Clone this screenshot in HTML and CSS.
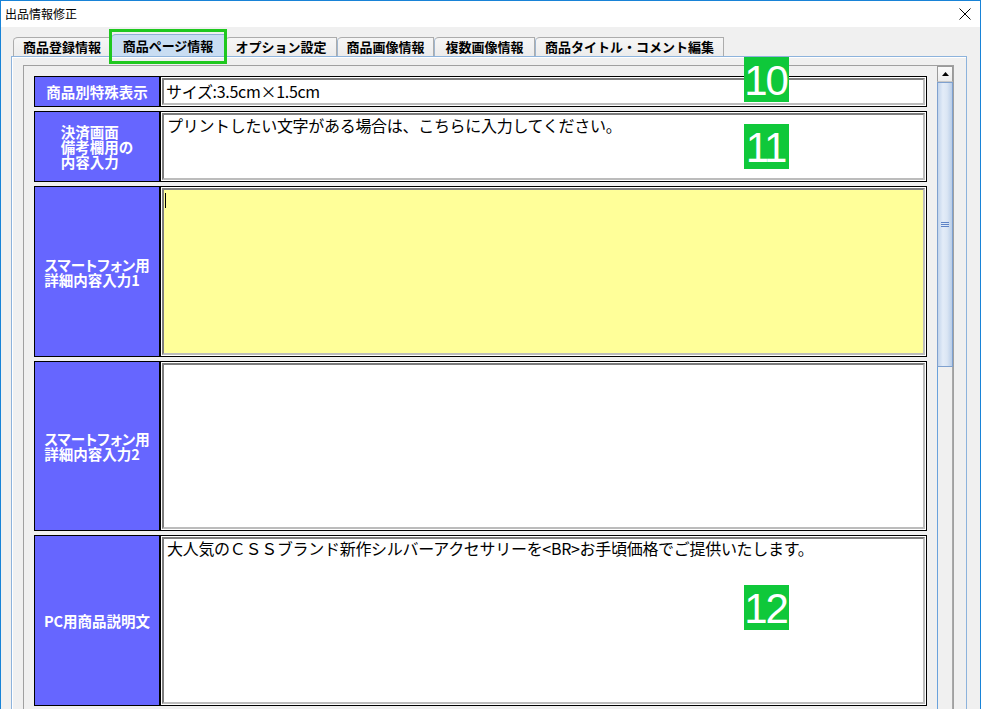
FILE: index.html
```html
<!DOCTYPE html>
<html lang="ja">
<head>
<meta charset="utf-8">
<title>出品情報修正</title>
<link rel="stylesheet" href="styles.css">
</head>
<body>
<div class="window">
  <div class="titlebar">
    <span class="title">出品情報修正</span>
    <svg class="close" width="12" height="12" viewBox="0 0 12 12"><path d="M0.5 0.5 L11.5 11.5 M11.5 0.5 L0.5 11.5" stroke="#000" stroke-width="1" fill="none"/></svg>
  </div>
  <div class="tabs">
    <div class="tab w98">商品登録情報</div>
    <div class="tab tab-active w114">商品ページ情報</div>
    <div class="tab w112">オプション設定</div>
    <div class="tab w97">商品画像情報</div>
    <div class="tab w101">複数画像情報</div>
    <div class="tab w189">商品タイトル・コメント編集</div>
  </div>
  <div class="panel">
    <div class="frame">
      <div class="content">
        <div class="row h31">
          <div class="label"><div class="label-text">商品別特殊表示</div></div>
          <div class="field"><div class="field-inner single">サイズ:3.5cm×1.5cm</div></div>
        </div>
        <div class="row h71">
          <div class="label"><div class="label-text">決済画面<br>備考欄用の<br>内容入力</div></div>
          <div class="field"><div class="field-inner multi">プリントしたい文字がある場合は、こちらに入力してください。</div></div>
        </div>
        <div class="row h171">
          <div class="label"><div class="label-text">スマートフォン用<br>詳細内容入力1</div></div>
          <div class="field"><div class="field-inner multi focused"><span class="caret"></span></div></div>
        </div>
        <div class="row h170">
          <div class="label"><div class="label-text">スマートフォン用<br>詳細内容入力2</div></div>
          <div class="field"><div class="field-inner multi"></div></div>
        </div>
        <div class="row h171">
          <div class="label"><div class="label-text">PC用商品説明文</div></div>
          <div class="field"><div class="field-inner multi pc">大人気のＣＳＳブランド新作シルバーアクセサリーを&lt;BR&gt;お手頃価格でご提供いたします。</div></div>
        </div>
      </div>
      <div class="scrollbar">
        <div class="sb-up"><svg width="7" height="4" viewBox="0 0 7 4"><path d="M0 4 L3.5 0 L7 4 Z" fill="#000"/></svg></div>
        <div class="sb-thumb"><span class="grip"></span></div>
        <div class="sb-track"></div>
      </div>
    </div>
  </div>
</div>
<div class="highlight"></div>
<div class="badge b10">10</div>
<div class="badge b11">11</div>
<div class="badge b12">12</div>
</body>
</html>
```
FILE: styles.css
```css
html, body {
  margin: 0;
  padding: 0;
}
body {
  width: 981px;
  height: 709px;
  overflow: hidden;
  font-family: "Noto Sans CJK JP", "Noto Sans", sans-serif;
  background: #f0f0f0;
}
.window {
  box-sizing: border-box;
  width: 981px;
  height: 709px;
  border: 1px solid #1883d7;
  border-bottom: none;
  background: #f0f0f0;
  display: flex;
  flex-direction: column;
}
.titlebar {
  height: 26px;
  flex: none;
  background: #fff;
  display: flex;
  align-items: center;
  justify-content: space-between;
  padding: 0 9px 0 4px;
}
.title {
  font-size: 12px;
  line-height: 14px;
  color: #000;
}
.close {
  display: block;
}
.tabs {
  flex: none;
  display: flex;
  align-items: flex-end;
  height: 19px;
  margin-top: 10px;
  padding-left: 12px;
}
.tab {
  box-sizing: border-box;
  height: 19px;
  border: 1px solid #acacac;
  border-bottom: none;
  border-top-left-radius: 5px 4px;
  background: linear-gradient(#f6f6f6, #ececec);
  font-size: 13px;
  font-weight: bold;
  line-height: 18px;
  text-align: center;
  color: #000;
  white-space: nowrap;
}
.tab + .tab {
  border-left-color: #9fb6cf;
}
.tab-active {
  height: 22px;
  line-height: 22px;
  background: #c9ddf2;
  border-color: #8fb0d6;
}
.w98 { width: 98px; }
.w114 { width: 114px; }
.w112 { width: 112px; }
.w97 { width: 97px; }
.w101 { width: 101px; }
.w189 { width: 189px; }
.panel {
  flex: 1;
  min-height: 0;
  margin: 0 13px 0 10px;
  border: 1px solid #8db3dc;
  border-bottom: none;
  box-shadow: inset 1px 1px 0 #fff;
  padding: 8px 12px 0 11px;
  display: flex;
  flex-direction: column;
}
.frame {
  flex: 1;
  min-height: 0;
  border: 1px solid #a0a0a0;
  border-bottom: none;
  display: flex;
}
.content {
  flex: 1;
  min-width: 0;
  padding: 10px 10px 0 10px;
  display: flex;
  flex-direction: column;
  gap: 4px;
  overflow: hidden;
}
.row {
  flex: none;
  display: flex;
}
.h31 { height: 31px; }
.h71 { height: 71px; }
.h170 { height: 170px; }
.h171 { height: 171px; }
.label {
  box-sizing: border-box;
  width: 126px;
  flex: none;
  background: #6666ff;
  border: 1px solid #000;
  display: flex;
  align-items: center;
  justify-content: center;
}
.label-text {
  color: #fff;
  font-size: 14.5px;
  font-weight: bold;
  line-height: 15px;
  font-feature-settings: "palt";
  text-align: left;
  white-space: nowrap;
}
.field {
  box-sizing: border-box;
  flex: 1;
  min-width: 0;
  border: 1px solid #000;
  padding: 1px;
  background: #fff;
  display: flex;
}
.field-inner {
  flex: 1;
  min-width: 0;
  border: 2px solid;
  border-color: #7d7d7d #bcbcbc #bcbcbc #7d7d7d;
  background: #fff;
  color: #000;
  font-size: 16px;
  letter-spacing: -0.3px;
  line-height: 17px;
  white-space: nowrap;
  overflow: hidden;
}
.single {
  display: flex;
  align-items: center;
  padding: 0 2px;
}
.multi {
  padding: 2px 3px;
}
.pc {
  padding-top: 1px;
}
.focused {
  background: #ffff99;
  position: relative;
}
.caret {
  position: absolute;
  left: 1px;
  top: 3px;
  width: 1px;
  height: 15px;
  background: #000;
}
.scrollbar {
  width: 16px;
  flex: none;
  display: flex;
  flex-direction: column;
}
.sb-up {
  box-sizing: border-box;
  height: 16px;
  flex: none;
  border: 1px solid #9a9a9a;
  border-bottom-color: #c9c9c9;
  background: linear-gradient(#fafafa, #ececec);
  display: flex;
  align-items: center;
  justify-content: center;
}
.sb-thumb {
  box-sizing: border-box;
  height: 285px;
  flex: none;
  border: 1px solid #7fa1cf;
  background: linear-gradient(90deg, #c3d5ec, #e3ecf8 35%, #dbe6f4 65%, #b9cde8);
  display: flex;
  align-items: center;
  justify-content: center;
}
.grip {
  display: block;
  width: 8px;
  height: 5px;
  background: linear-gradient(#5f84c6 0 1px, transparent 1px 2px, #5f84c6 2px 3px, transparent 3px 4px, #5f84c6 4px 5px);
}
.sb-track {
  flex: 1;
  border-left: 1px solid #6aa2dc;
  border-right: 1px solid #a9a9a9;
  background: #f0f0f0;
}
.highlight {
  position: absolute;
  left: 109px;
  top: 29px;
  width: 118px;
  height: 35px;
  box-sizing: border-box;
  border: 3px solid #1fc81f;
}
.badge {
  position: absolute;
  left: 744px;
  width: 45px;
  height: 45px;
  box-sizing: border-box;
  padding-top: 2px;
  background: #0fc83a;
  color: #fff;
  font-family: "Liberation Sans", Arial, sans-serif;
  font-size: 42px;
  line-height: 43px;
  letter-spacing: -2px;
  text-align: center;
  text-indent: -2px;
}
.b10 { top: 57px; }
.b11 { top: 124px; }
.b12 { top: 585px; }
```
